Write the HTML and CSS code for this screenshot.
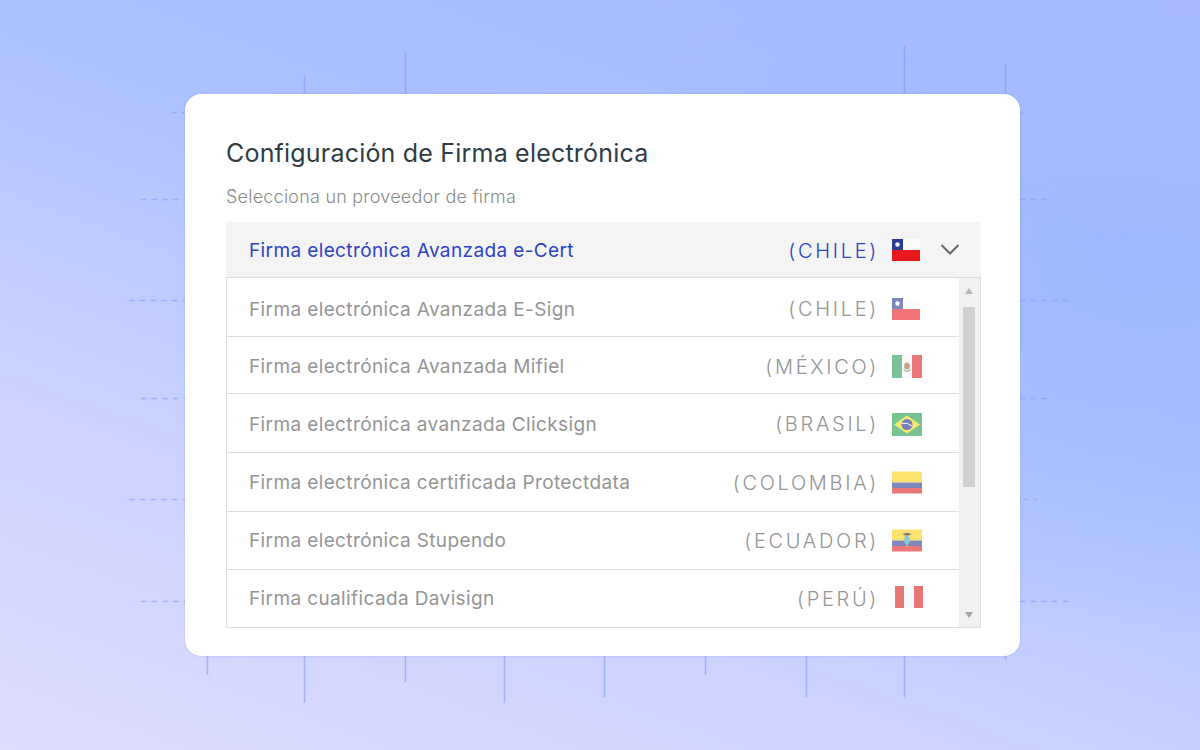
FILE: index.html
```html
<!DOCTYPE html>
<html lang="es">
<head>
  <meta charset="UTF-8" />
  <meta name="viewport" content="width=device-width, initial-scale=1.0" />
  <title>Configuración de Firma electrónica</title>
  <link rel="stylesheet" href="styles.css">
</head>
<body>
  <!-- ticks and dashes behind the card -->
  <svg class="backdrop" width="1200" height="750" viewBox="0 0 1200 750">
    <g class="ticks">
      <path d="M304.5 75V94M405.5 52V94M904.5 46V94M1005.5 64V94" />
      <path d="M207.5 656V675M304.5 656V703M405.5 656V682M504.5 656V703M604.5 656V697M705.5 656V675M806.5 656V697M904.5 656V697M1005.5 656V660" />
    </g>
    <g class="dashes">
      <path d="M171 112.5H185M1020 112.5H1023" />
      <path d="M141 199.5H185M1020 199.5H1050" />
      <path d="M129 300.5H185M1020 300.5H1072" />
      <path d="M141 398.5H185M1020 398.5H1050" />
      <path d="M129 499.5H185M1023 499.5H1037" />
      <path d="M141 601.5H185M1020 601.5H1072" />
    </g>
  </svg>

  <svg class="flag-defs" width="0" height="0">
    <symbol id="flag-cl" viewBox="0 0 28 22">
      <rect width="28" height="11" fill="#fbfbfb" />
      <rect y="11" width="28" height="11" fill="#e8191c" />
      <rect width="11" height="11" fill="#2b3a92" />
      <circle cx="5.5" cy="5.5" r="2.2" fill="#fff" />
    </symbol>
    <symbol id="flag-mx" viewBox="0 0 30 23">
      <rect width="30" height="23" fill="#f7f8fb" />
      <rect width="10" height="23" fill="#1f9a50" />
      <rect x="20" width="10" height="23" fill="#dc1f1f" />
      <ellipse cx="15" cy="11" rx="3" ry="3.6" fill="#a8683a" />
      <path d="M11.5 14.5q3.5 3.5 7 0" fill="none" stroke="#6d9a5c" stroke-width="1.2" />
    </symbol>
    <symbol id="flag-br" viewBox="0 0 30 23">
      <rect width="30" height="23" fill="#1e9c4b" />
      <path d="M15 2.5L28 11.5L15 20.5L2 11.5Z" fill="#f8d90f" />
      <circle cx="15" cy="11.5" r="5.6" fill="#1c2f8c" />
      <path d="M9.6 10.2q6-1 10.8 3" fill="none" stroke="#fff" stroke-width="1" />
    </symbol>
    <symbol id="flag-co" viewBox="0 0 30 22">
      <rect width="30" height="11" fill="#fdcf11" />
      <rect y="11" width="30" height="5.5" fill="#2b3a92" />
      <rect y="16.5" width="30" height="5.5" fill="#de2020" />
    </symbol>
    <symbol id="flag-ec" viewBox="0 0 30 22">
      <rect width="30" height="11" fill="#fdcf11" />
      <rect y="11" width="30" height="5.5" fill="#2b3a92" />
      <rect y="16.5" width="30" height="5.5" fill="#de2020" />
      <path d="M10.5 4.5q4.5-2 9 0l-3 1.5h-3Z" fill="#1d1d1d" />
      <ellipse cx="15" cy="10.5" rx="2.8" ry="4.2" fill="#3ea6c4" />
      <path d="M15 14.5v3" stroke="#b98a2a" stroke-width="1.5" />
    </symbol>
    <symbol id="flag-pe" viewBox="0 0 28 22">
      <rect width="28" height="22" fill="#f6f7fc" />
      <rect width="9" height="22" fill="#d81e1e" />
      <rect x="19" width="9" height="22" fill="#d81e1e" />
    </symbol>
  </svg>

  <main class="card">
    <h1>Configuración de Firma electrónica</h1>
    <p class="hint">Selecciona un proveedor de firma</p>

    <div class="selected">
      <span class="name">Firma electrónica Avanzada e-Cert</span>
      <span class="country">(CHILE)</span>
      <span class="flag-slot"><svg class="flag flag-small"><use href="#flag-cl" /></svg></span>
      <svg class="chevron" width="20" height="13" viewBox="0 0 20 13">
        <path d="M1.5 2L10 10.5L18.5 2" fill="none" stroke="#666" stroke-width="2" />
      </svg>
    </div>

    <div class="dropdown">
      <ul class="options">
        <li class="option">
          <span class="name">Firma electrónica Avanzada E-Sign</span>
          <span class="country">(CHILE)</span>
          <span class="flag-slot"><svg class="flag flag-small"><use href="#flag-cl" /></svg></span>
        </li>
        <li class="option">
          <span class="name">Firma electrónica Avanzada Mifiel</span>
          <span class="country">(MÉXICO)</span>
          <span class="flag-slot"><svg class="flag"><use href="#flag-mx" /></svg></span>
        </li>
        <li class="option">
          <span class="name">Firma electrónica avanzada Clicksign</span>
          <span class="country">(BRASIL)</span>
          <span class="flag-slot"><svg class="flag"><use href="#flag-br" /></svg></span>
        </li>
        <li class="option">
          <span class="name">Firma electrónica certificada Protectdata</span>
          <span class="country">(COLOMBIA)</span>
          <span class="flag-slot"><svg class="flag"><use href="#flag-co" /></svg></span>
        </li>
        <li class="option">
          <span class="name">Firma electrónica Stupendo</span>
          <span class="country">(ECUADOR)</span>
          <span class="flag-slot"><svg class="flag"><use href="#flag-ec" /></svg></span>
        </li>
        <li class="option">
          <span class="name">Firma cualificada Davisign</span>
          <span class="country">(PERÚ)</span>
          <span class="flag-slot flag-slot-end"><svg class="flag flag-small"><use href="#flag-pe" /></svg></span>
        </li>
      </ul>
      <div class="scrollbar">
        <span class="arrow arrow-up"></span>
        <span class="thumb"></span>
        <span class="arrow arrow-down"></span>
      </div>
    </div>
  </main>
</body>
</html>
```

FILE: styles.css
```css
:root {
  --text-grey: #959595;
  --line-grey: #dfdfdf;
  --accent-blue: #2c43c6;
}

* {
  box-sizing: border-box;
}

body {
  position: relative;
  width: 1200px;
  height: 750px;
  margin: 0;
  padding: 94px 0 0 185px;
  overflow: hidden;
  font-family: Inter, "Liberation Sans", sans-serif;
  background-color: #a9c0ff;
  background-image:
    radial-gradient(ellipse 420px 260px at 100% 0%, rgba(176, 184, 255, 0.5), rgba(176, 184, 255, 0)),
    radial-gradient(ellipse 560px 380px at 95% 35%, rgba(156, 185, 255, 0.9), rgba(156, 185, 255, 0)),
    linear-gradient(20deg, #dedcff 0%, #ccd3ff 30%, #acc1ff 62%, #a0b8ff 100%);
}

.backdrop {
  position: absolute;
  top: 0;
  left: 0;
}

.flag-defs {
  position: absolute;
}

.ticks path {
  fill: none;
  stroke: #7d96fb;
  stroke-opacity: 0.55;
  stroke-width: 1.5;
}

.dashes path {
  fill: none;
  stroke: #7d96fb;
  stroke-opacity: 0.5;
  stroke-width: 1.5;
  stroke-dasharray: 5.5 5.2;
}

.card {
  position: relative;
  width: 835px;
  height: 562px;
  padding: 41px 39px 0 41px;
  background: #fff;
  border-radius: 16px;
  box-shadow: 0 0 2px rgba(120, 150, 255, 0.6);
}

h1 {
  margin: 0;
  font-size: 25px;
  line-height: 36px;
  font-weight: 400;
  letter-spacing: 0.2px;
  color: #303c44;
}

.hint {
  margin: 14px 0 0;
  font-size: 18px;
  line-height: 24px;
  font-weight: 300;
  letter-spacing: 0.22px;
  color: #8b8b8b;
}

.selected {
  display: flex;
  align-items: center;
  height: 56px;
  margin-top: 13px;
  padding: 2px 21px 0 23px;
  background: #f4f4f4;
  border-bottom: 1px solid #dcdcdc;
  color: var(--accent-blue);
}

.selected .flag,
.selected .chevron {
  margin-top: -2px;
}

.name {
  font-size: 19px;
  font-weight: 400;
  letter-spacing: 0.38px;
}

.country {
  margin-left: auto;
  font-size: 20px;
  font-weight: 300;
  letter-spacing: 2.7px;
}

.flag-slot {
  display: flex;
  width: 31px;
  margin-left: 13px;
}

.flag-slot-end {
  justify-content: flex-end;
  margin-top: -3px;
}

.flag {
  display: block;
  width: 30px;
  height: 23px;
}

.flag-small {
  width: 28px;
  height: 22px;
}

.chevron {
  margin-left: 17px;
}

.dropdown {
  display: flex;
  height: 350px;
  border: 1px solid var(--line-grey);
  border-top: 0;
}

.options {
  flex: 1;
  margin: 0;
  padding: 0;
  list-style: none;
}

/* row heights differ by a pixel or so, as in the design */
.option {
  display: flex;
  align-items: center;
  height: 58px;
  padding: 0 36px 0 22px;
  border-bottom: 1px solid var(--line-grey);
  color: var(--text-grey);
}

.option:first-child {
  height: 59px;
  padding-top: 4px;
}

.option:nth-child(2) {
  height: 57px;
  padding-top: 3px;
}

.option:nth-child(3) {
  height: 59px;
  padding-top: 2px;
}

.option:nth-child(4) {
  height: 59px;
  padding-top: 1px;
}

.option:last-child {
  height: 57px;
  border-bottom: 0;
}

.option .flag {
  opacity: 0.6;
}

.scrollbar {
  display: flex;
  flex-direction: column;
  align-items: center;
  width: 21px;
  padding-right: 1px;
  background: #f1f1f1;
}

.thumb {
  width: 12px;
  height: 180px;
  margin-top: 13px;
  background: #d0d0d0;
}

.arrow {
  width: 0;
  height: 0;
  border-left: 4px solid transparent;
  border-right: 4px solid transparent;
}

.arrow-up {
  margin-top: 10px;
  border-bottom: 6px solid #b5b5b5;
}

.arrow-down {
  margin-top: auto;
  margin-bottom: 9px;
  border-top: 6px solid #a5a5a5;
}
```
